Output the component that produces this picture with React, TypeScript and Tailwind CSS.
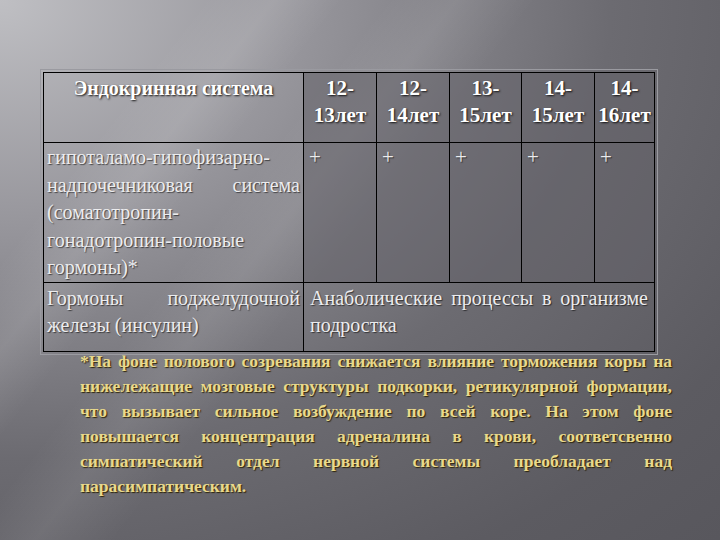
import React from "react";

function JLine({ children, last }: { children: React.ReactNode; last?: boolean }) {
  return (
    <div className={last ? "whitespace-nowrap" : "text-justify [text-align-last:justify] whitespace-nowrap"}>
      {children}
    </div>
  );
}

export default function App() {
  const ages = [
    ["12-", "13лет"],
    ["12-", "14лет"],
    ["13-", "15лет"],
    ["14-", "15лет"],
    ["14-", "16лет"],
  ];
  const foot = [
    "*На фоне полового созревания снижается влияние торможения коры на",
    "нижележащие мозговые структуры подкорки, ретикулярной формации,",
    "что вызывает сильное возбуждение по всей коре. На этом фоне",
    "повышается концентрация адреналина в крови, соответсвенно",
    "симпатический отдел нервной системы преобладает над",
  ];
  return (
    <div className="w-[720px] h-[540px] overflow-hidden font-['Liberation_Serif'] bg-[linear-gradient(128deg,transparent_18%,rgba(255,255,255,0.10)_24%,transparent_30%,transparent_34%,rgba(255,255,255,0.08)_40%,transparent_47%),radial-gradient(ellipse_at_0%_0%,#bfbfc3_0%,#96959b_30%,#6c6b71_60%,#5c5b61_85%,#58575d_100%)]">
      <div className="pt-[72px] pl-[43px]">
        <table className="table-fixed border-collapse w-[611px] font-['Liberation_Serif'] outline outline-1 outline-offset-2 outline-[#9a9aa0]">
          <colgroup>
            <col className="w-[260px]" />
            <col className="w-[73px]" />
            <col className="w-[73px]" />
            <col className="w-[72px]" />
            <col className="w-[73px]" />
            <col className="w-[60px]" />
          </colgroup>
          <tbody>
            <tr className="h-[70px]">
              <td className="border border-black align-top text-center pt-[2px] text-[20px] leading-[27px] font-bold text-white [text-shadow:1px_1px_2px_rgba(0,0,0,0.85)]">
                Эндокринная система
              </td>
              {ages.map((a, i) => (
                <td
                  key={i}
                  className="border border-black align-top text-center pt-[2px] text-[21px] leading-[27px] font-bold text-white bg-[#626168]/55 [text-shadow:1px_1px_2px_rgba(0,0,0,0.85)]"
                >
                  <div>{a[0]}</div>
                  <div>{a[1]}</div>
                </td>
              ))}
            </tr>
            <tr className="h-[140px]">
              <td className="border border-black align-top px-[3px] pt-[1px] text-[20px] leading-[27.5px] text-[#ececee] [text-shadow:1px_1px_1px_rgba(0,0,0,0.55)]">
                <JLine last>гипоталамо-гипофизарно-</JLine>
                <JLine>надпочечниковая система</JLine>
                <JLine last>(соматотропин-</JLine>
                <JLine last>гонадотропин-половые</JLine>
                <JLine last>гормоны)*</JLine>
              </td>
              {ages.map((_, i) => (
                <td
                  key={i}
                  className="border border-black align-top px-[5px] pt-[1px] text-[21px] leading-[27.5px] text-[#ececee] bg-[#626168]/55 [text-shadow:1px_1px_1px_rgba(0,0,0,0.55)]"
                >
                  +
                </td>
              ))}
            </tr>
            <tr className="h-[69px]">
              <td className="border border-black align-top px-[3px] pt-[2px] text-[20px] leading-[27px] text-[#ececee] [text-shadow:1px_1px_1px_rgba(0,0,0,0.55)]">
                <JLine>Гормоны поджелудочной</JLine>
                <JLine last>железы (инсулин)</JLine>
              </td>
              <td
                colSpan={5}
                className="border border-black align-top px-[6px] pt-[2px] text-[20px] leading-[27px] text-[#ececee] [text-shadow:1px_1px_1px_rgba(0,0,0,0.55)]"
              >
                <JLine>Анаболические процессы в организме</JLine>
                <JLine last>подростка</JLine>
              </td>
            </tr>
          </tbody>
        </table>
      </div>
      <div className="ml-[80px] -mt-[3px] w-[592px] font-['Liberation_Serif'] font-bold text-[17.5px] leading-[25px] text-[#e9d98c] [text-shadow:1px_1px_1px_rgba(40,30,0,0.9)]">
        {foot.map((l, i) => (
          <JLine key={i}>{l}</JLine>
        ))}
        <JLine last>парасимпатическим.</JLine>
      </div>
    </div>
  );
}
